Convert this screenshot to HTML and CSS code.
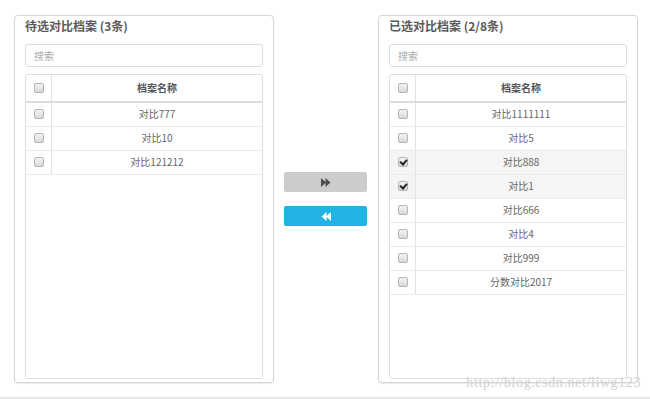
FILE: index.html
```html
<!DOCTYPE html>
<html lang="zh">
<head>
<meta charset="utf-8">
<link rel="stylesheet" href="styles.css">
</head>
<body>
<div class="page">
  <section class="panel">
    <h2 class="panel-title">待选对比档案 (3条)</h2>
    <input class="search" type="text" placeholder="搜索">
    <div class="table">
      <div class="row head"><div class="cb-cell"><span class="cb"></span></div><div class="name">档案名称</div></div>
      <div class="row"><div class="cb-cell"><span class="cb"></span></div><div class="name">对比777</div></div>
      <div class="row"><div class="cb-cell"><span class="cb"></span></div><div class="name">对比10</div></div>
      <div class="row"><div class="cb-cell"><span class="cb"></span></div><div class="name">对比121212</div></div>
      <div class="filler"></div>
    </div>
  </section>

  <div class="actions">
    <button class="btn btn-gray" type="button">
      <svg width="10" height="9" viewBox="0 0 10 9"><path d="M0 0 L5 4.5 L0 9 Z M4.5 0 L9.5 4.5 L4.5 9 Z" fill="#4d4d4d"/></svg>
    </button>
    <button class="btn btn-blue" type="button">
      <svg width="10" height="9" viewBox="0 0 10 9"><path d="M10 0 L5 4.5 L10 9 Z M5.5 0 L0.5 4.5 L5.5 9 Z" fill="#fff"/></svg>
    </button>
  </div>

  <section class="panel">
    <h2 class="panel-title">已选对比档案 (2/8条)</h2>
    <input class="search" type="text" placeholder="搜索">
    <div class="table">
      <div class="row head"><div class="cb-cell"><span class="cb"></span></div><div class="name">档案名称</div></div>
      <div class="row"><div class="cb-cell"><span class="cb"></span></div><div class="name">对比1111111</div></div>
      <div class="row"><div class="cb-cell"><span class="cb"></span></div><div class="name">对比5</div></div>
      <div class="row selected"><div class="cb-cell"><span class="cb checked"></span></div><div class="name">对比888</div></div>
      <div class="row selected"><div class="cb-cell"><span class="cb checked"></span></div><div class="name">对比1</div></div>
      <div class="row"><div class="cb-cell"><span class="cb"></span></div><div class="name">对比666</div></div>
      <div class="row"><div class="cb-cell"><span class="cb"></span></div><div class="name">对比4</div></div>
      <div class="row"><div class="cb-cell"><span class="cb"></span></div><div class="name">对比999</div></div>
      <div class="row"><div class="cb-cell"><span class="cb"></span></div><div class="name">分数对比2017</div></div>
      <div class="filler"></div>
    </div>
  </section>
</div>
<div class="watermark">http://blog.csdn.net/liwg123</div>
</body>
</html>
```

FILE: styles.css
```css
html, body {
  margin: 0;
  padding: 0;
  background: #fff;
}
body {
  width: 650px;
  height: 399px;
  position: relative;
  overflow: hidden;
  font-family: "Noto Sans CJK SC", "Liberation Sans", sans-serif;
  color: #555;
  border-bottom: 2px solid #e6e6e6;
  box-sizing: border-box;
}
.page {
  display: flex;
  align-items: flex-start;
  padding: 15px 0 0 14px;
}
.panel {
  width: 260px;
  height: 368px;
  box-sizing: border-box;
  border: 1px solid #d6d6d6;
  border-radius: 4px;
  box-shadow: 0 1px 1px rgba(0,0,0,0.08);
  padding: 0 10px 3px 10px;
  display: flex;
  flex-direction: column;
}
.panel-title {
  margin: 0;
  height: 28px;
  padding-top: 1px;
  box-sizing: border-box;
  line-height: 17px;
  font-size: 12px;
  font-weight: bold;
  color: #5a5a5a;
}
.search {
  display: block;
  height: 23px;
  box-sizing: border-box;
  width: 100%;
  border: 1px solid #ddd;
  border-radius: 3px;
  padding: 0 8px;
  font-family: inherit;
  font-size: 10px;
  color: #555;
  outline: none;
  margin: 0 0 7px 0;
}
.search::placeholder { color: #aaa; }
.table {
  flex: 1;
  border: 1px solid #ddd;
  border-radius: 3px;
  display: flex;
  flex-direction: column;
  overflow: hidden;
}
.row {
  display: flex;
  height: 24px;
  border-bottom: 1px solid #ececec;
  box-sizing: border-box;
  font-size: 10px;
  color: #666;
}
.row .name { padding-bottom: 2px; }
.row.head {
  height: 28px;
  border-bottom: 2px solid #ddd;
  font-weight: bold;
  color: #555;
}
.row.selected { background: #f5f5f5; }
.filler { flex: 1; }
.cb-cell {
  width: 25px;
  flex: none;
  border-right: 1px solid #e2e2e2;
  display: flex;
  align-items: center;
  justify-content: center;
  padding-bottom: 1px;
  box-sizing: content-box;
}
.name {
  flex: 1;
  display: flex;
  align-items: center;
  justify-content: center;
}
.cb {
  width: 8px;
  height: 8px;
  border: 1px solid #b5b5b5;
  border-radius: 2px;
  background: linear-gradient(#f4f4f4, #d8d8d8);
  position: relative;
}
.cb.checked::after {
  content: "";
  position: absolute;
  left: 2px;
  top: 0px;
  width: 3px;
  height: 5px;
  border-right: 2px solid #222;
  border-bottom: 2px solid #222;
  transform: rotate(40deg);
}
.actions {
  width: 104px;
  flex: none;
  display: flex;
  flex-direction: column;
  align-items: flex-start;
  padding: 157px 0 0 10px;
  box-sizing: border-box;
  gap: 14px;
}
.btn {
  width: 83px;
  height: 20px;
  border: none;
  border-radius: 2px;
  padding: 0;
  display: flex;
  align-items: center;
  justify-content: center;
}
.btn-gray { background: #cccccc; }
.btn-blue { background: #21b4e3; }
.watermark {
  position: absolute;
  right: 9px;
  bottom: 6px;
  font-family: "Liberation Serif", serif;
  font-size: 14px;
  color: #d2d2d2;
  letter-spacing: 0.6px;
}
```
